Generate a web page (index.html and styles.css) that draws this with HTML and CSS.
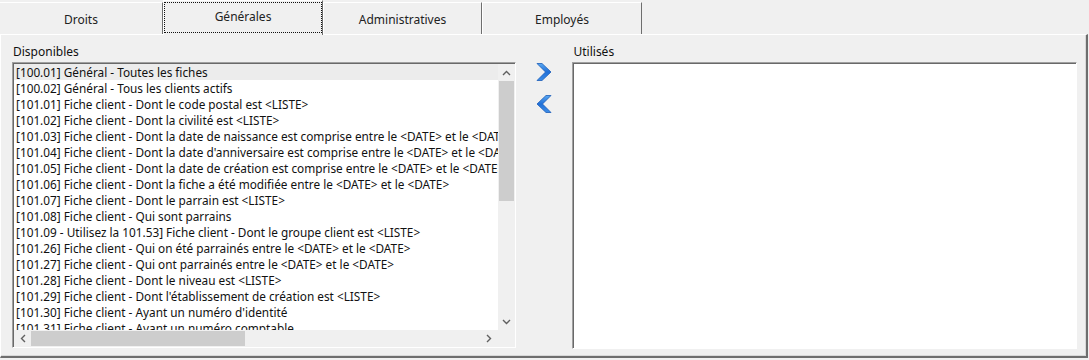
FILE: index.html
```html
<!DOCTYPE html>
<html lang="fr">
<head>
    <meta charset="UTF-8">
    <title>Filtres</title>
    <link rel="stylesheet" href="styles.css">
</head>
<body>

    <div class="tabs">
        <div class="tab tab-droits">Droits</div>
        <div class="tab tab-generales active"><span class="focus">Générales</span></div>
        <div class="tab tab-admin">Administratives</div>
        <div class="tab tab-employes">Employés</div>
    </div>

    <div class="panel">
        <div class="col col-left">
            <div class="label">Disponibles</div>
            <div class="listbox">
                <div class="rows">
                    <div class="row selected">[100.01] Général - Toutes les fiches</div>
                    <div class="row">[100.02] Général - Tous les clients actifs</div>
                    <div class="row">[101.01] Fiche client - Dont le code postal est &lt;LISTE&gt;</div>
                    <div class="row">[101.02] Fiche client - Dont la civilité est &lt;LISTE&gt;</div>
                    <div class="row">[101.03] Fiche client - Dont la date de naissance est comprise entre le &lt;DATE&gt; et le &lt;DATE&gt;</div>
                    <div class="row">[101.04] Fiche client - Dont la date d'anniversaire est comprise entre le &lt;DATE&gt; et le &lt;DATE&gt;</div>
                    <div class="row">[101.05] Fiche client - Dont la date de création est comprise entre le &lt;DATE&gt; et le &lt;DATE&gt;</div>
                    <div class="row">[101.06] Fiche client - Dont la fiche a été modifiée entre le &lt;DATE&gt; et le &lt;DATE&gt;</div>
                    <div class="row">[101.07] Fiche client - Dont le parrain est &lt;LISTE&gt;</div>
                    <div class="row">[101.08] Fiche client - Qui sont parrains</div>
                    <div class="row">[101.09 - Utilisez la 101.53] Fiche client - Dont le groupe client est &lt;LISTE&gt;</div>
                    <div class="row">[101.26] Fiche client - Qui on été parrainés entre le &lt;DATE&gt; et le &lt;DATE&gt;</div>
                    <div class="row">[101.27] Fiche client - Qui ont parrainés entre le &lt;DATE&gt; et le &lt;DATE&gt;</div>
                    <div class="row">[101.28] Fiche client - Dont le niveau est &lt;LISTE&gt;</div>
                    <div class="row">[101.29] Fiche client - Dont l'établissement de création est &lt;LISTE&gt;</div>
                    <div class="row">[101.30] Fiche client - Ayant un numéro d'identité</div>
                    <div class="row">[101.31] Fiche client - Ayant un numéro comptable</div>
                    <div class="row">[101.32] Fiche client - Ayant un numéro de carte</div>
                </div>
                <div class="vscroll">
                    <div class="sb-btn">
                        <svg width="9" height="6" viewBox="0 0 9 6"><path d="M1 5 L4.5 1.5 L8 5" fill="none" stroke="#606060" stroke-width="1.4"/></svg>
                    </div>
                    <div class="sb-track">
                        <div class="vthumb"></div>
                    </div>
                    <div class="sb-btn">
                        <svg width="9" height="6" viewBox="0 0 9 6"><path d="M1 1 L4.5 4.5 L8 1" fill="none" stroke="#606060" stroke-width="1.4"/></svg>
                    </div>
                </div>
                <div class="hscroll">
                    <div class="sb-btn">
                        <svg width="6" height="9" viewBox="0 0 6 9"><path d="M5 1 L1.5 4.5 L5 8" fill="none" stroke="#606060" stroke-width="1.4"/></svg>
                    </div>
                    <div class="sb-track">
                        <div class="hthumb"></div>
                    </div>
                    <div class="sb-btn">
                        <svg width="6" height="9" viewBox="0 0 6 9"><path d="M1 1 L4.5 4.5 L1 8" fill="none" stroke="#606060" stroke-width="1.4"/></svg>
                    </div>
                </div>
                <div class="corner"></div>
            </div>
        </div>

        <div class="moves">
            <button class="move" title="Ajouter">
                <svg width="18" height="20" viewBox="0 0 18 20">
                    <defs>
                        <linearGradient id="gr" x1="0" y1="0" x2="0" y2="1">
                            <stop offset="0" stop-color="#5aa8f2"/>
                            <stop offset="0.5" stop-color="#1f6fd8"/>
                            <stop offset="1" stop-color="#3d8ee8"/>
                        </linearGradient>
                    </defs>
                    <path d="M2 1.5 L7 1.5 L16 10 L7 18.5 L2 18.5 L10.5 10 Z" fill="url(#gr)" stroke="#1a5cb8" stroke-width="0.8" stroke-linejoin="round"/>
                </svg>
            </button>
            <button class="move" title="Retirer">
                <svg width="18" height="20" viewBox="0 0 18 20">
                    <defs>
                        <linearGradient id="gl" x1="0" y1="0" x2="0" y2="1">
                            <stop offset="0" stop-color="#5aa8f2"/>
                            <stop offset="0.5" stop-color="#1f6fd8"/>
                            <stop offset="1" stop-color="#3d8ee8"/>
                        </linearGradient>
                    </defs>
                    <path d="M16 1.5 L11 1.5 L2 10 L11 18.5 L16 18.5 L7.5 10 Z" fill="url(#gl)" stroke="#1a5cb8" stroke-width="0.8" stroke-linejoin="round"/>
                </svg>
            </button>
        </div>

        <div class="col col-right">
            <div class="label">Utilisés</div>
            <div class="usedbox"></div>
        </div>
    </div>

</body>
</html>
```

FILE: styles.css
```css
* {
    box-sizing: border-box;
    margin: 0;
    padding: 0;
}

body {
    font-family: "Noto Sans", "Open Sans", sans-serif;
    font-size: 12px;
    color: #111;
    background-color: #f0f0f0;
    width: 1089px;
    height: 360px;
    overflow: hidden;
}

/* onglets */
.tabs {
    display: flex;
    height: 34px;
    padding-top: 2px;
}

.tab {
    height: 32px;
    display: flex;
    justify-content: center;
    align-items: center;
    padding-top: 2px;
    border-top: 1px solid #ffffff;
    border-left: 1px solid #ffffff;
    border-right: 1px solid #6e6e6e;
    color: #222;
}

.tab-droits { width: 163px; border-left: none; }
.tab-generales { width: 160px; }
.tab-admin { width: 159px; }
.tab-employes { width: 160px; }

.tab.active {
    height: 35px;
    margin-top: -2px;
    margin-bottom: -1px;
    padding: 1px 0 2px 0;
    align-items: stretch;
    background-color: #f0f0f0;
    position: relative;
    z-index: 1;
}

.focus {
    flex: 1;
    display: flex;
    justify-content: center;
    padding-top: 5px;
    border: 1px dotted #111;
}

/* panneau */
.panel {
    width: 1088px;
    height: 324px;
    border-top: 1px solid #ffffff;
    border-left: 1px solid #ffffff;
    border-right: 2px solid #6e6e6e;
    border-bottom: 2px solid #6e6e6e;
    box-shadow: inset -1px -1px 0 #d8d8d8;
    display: flex;
    padding: 9px 9px 0 11px;
}

.col {
    display: flex;
    flex-direction: column;
}

.label {
    height: 18px;
    line-height: 16px;
    padding-left: 1px;
}

.col-left {
    width: 504px;
}

.col-right {
    width: 505px;
}

.listbox {
    height: 286px;
    display: grid;
    grid-template-columns: 1fr 17px;
    grid-template-rows: 1fr 17px;
    border-top: 1px solid #a0a0a0;
    border-left: 1px solid #a0a0a0;
    border-right: 1px solid #ffffff;
    border-bottom: 1px solid #ffffff;
    box-shadow: inset 1px 1px 0 #696969;
    background-color: #ffffff;
    padding: 1px 0 0 1px;
}

.rows {
    overflow: hidden;
    background-color: #ffffff;
}

.row {
    height: 16px;
    line-height: 16px;
    padding-left: 2px;
    font-size: 11.8px;
    white-space: nowrap;
}

.row.selected {
    background-color: #ececec;
}

.vscroll {
    display: flex;
    flex-direction: column;
    background-color: #f0f0f0;
}

.hscroll {
    display: flex;
    background-color: #f0f0f0;
}

.sb-btn {
    width: 17px;
    height: 17px;
    flex: none;
    display: flex;
    justify-content: center;
    align-items: center;
}

.sb-track {
    flex: 1;
    display: flex;
}

.vscroll .sb-track {
    flex-direction: column;
}

.vthumb {
    height: 120px;
    margin: 0 1px;
    background-color: #cdcdcd;
}

.hthumb {
    width: 214px;
    margin: 1px 0;
    background-color: #cdcdcd;
}

.corner {
    background-color: #f0f0f0;
}

.moves {
    width: 57px;
    display: flex;
    flex-direction: column;
    align-items: flex-start;
    padding: 18px 0 0 19px;
    gap: 12px;
}

.move {
    border: none;
    background: none;
    width: 18px;
    height: 20px;
    display: block;
}

.usedbox {
    height: 287px;
    background-color: #ffffff;
    border-top: 1px solid #a0a0a0;
    border-left: 1px solid #a0a0a0;
    border-right: 1px solid #ffffff;
    border-bottom: 1px solid #ffffff;
    box-shadow: inset 1px 1px 0 #696969;
}
```
